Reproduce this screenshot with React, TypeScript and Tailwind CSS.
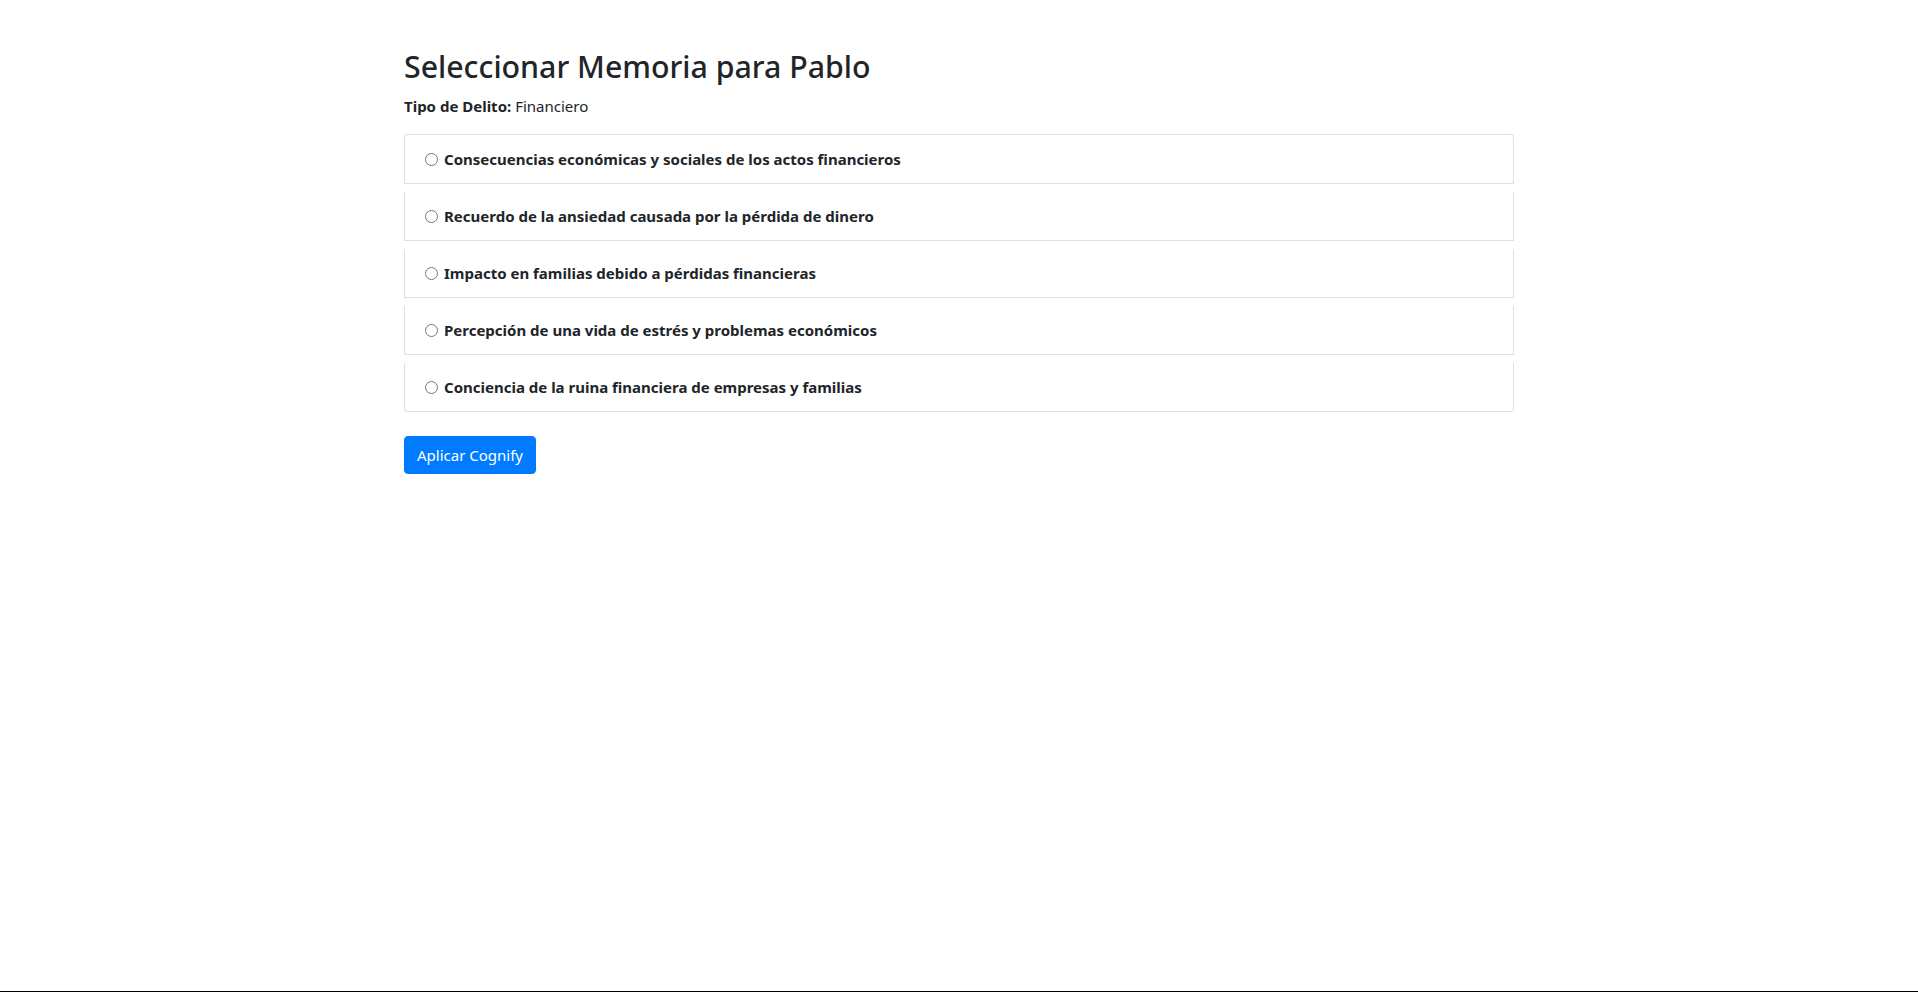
import React from "react";

const items = [
  "Consecuencias económicas y sociales de los actos financieros",
  "Recuerdo de la ansiedad causada por la pérdida de dinero",
  "Impacto en familias debido a pérdidas financieras",
  "Percepción de una vida de estrés y problemas económicos",
  "Conciencia de la ruina financiera de empresas y familias",
];

export default function App() {
  return (
    <div
      className="h-[992px] border-b border-black bg-white text-[#212529] text-[15px] leading-6"
      style={{ fontFamily: '"Noto Sans", "Segoe UI", sans-serif' }}
    >
      <div className="w-[1110px] mx-auto pt-12">
        <h2 className="text-[30.3px] leading-[38.4px] font-medium mb-2">Seleccionar Memoria para Pablo</h2>
        <p className="mb-4">
          <strong className="font-bold">Tipo de Delito:</strong> Financiero
        </p>
        <div className="flex flex-col">
          {items.map((t, i) => (
            <div
              key={i}
              className={
                "mb-2 border-x border-b border-[rgba(0,0,0,0.125)] bg-white " +
                (i === 0 ? "border-t rounded-t-[4px] " : "") +
                (i === items.length - 1 ? "rounded-b-[4px]" : "")
              }
            >
              <div className="px-5 py-3">
                <label className="font-bold flex items-center">
                  <input type="radio" name="memoria" className="ml-0 mr-[3px] w-[13px] h-[13px]" />
                  <span className="ml-[3px]">{t}</span>
                </label>
              </div>
            </div>
          ))}
        </div>
        <button className="mt-4 h-[38px] px-3 bg-[#007bff] border border-[#007bff] text-white rounded-[4px] leading-6">
          Aplicar Cognify
        </button>
      </div>
    </div>
  );
}
